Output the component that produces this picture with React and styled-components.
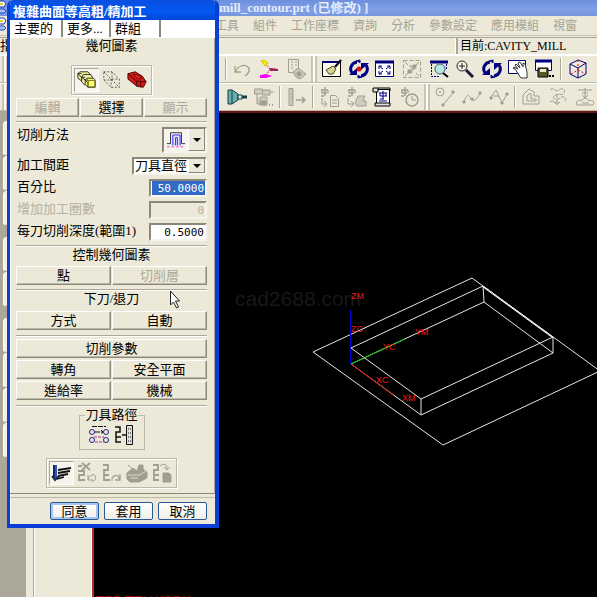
import React, { useState } from 'react'
import styled, { createGlobalStyle, css } from 'styled-components'

const GlobalStyle = createGlobalStyle`
    * {
        box-sizing: border-box;
    }

    body {
        margin: 0;
        background: #000;
        font-family: "Liberation Serif", "Noto Sans CJK TC", serif;
        font-size: 13px;
        color: #000;
    }

    button, input, select {
        font: inherit;
        color: inherit;
        margin: 0;
    }
`

const Window = styled.div`
    position: relative;
    display: flex;
    flex-direction: column;
    height: 100vh;
    overflow: hidden;
    background: #ece9d8;
    white-space: nowrap;
`

const TitleBar = styled.header`
    display: flex;
    flex: none;
    gap: 212px;
    height: 16px;
    line-height: 16px;
    overflow: hidden;
    background: linear-gradient(#6d8fdd, #809fe6 60%, #7796e0);
    color: #e4ecfb;
    font-size: 13px;
    font-weight: bold;
`

const MenuBar = styled.nav`
    display: flex;
    flex: none;
    gap: 14px;
    height: 20px;
    overflow: hidden;
    border-bottom: 1px solid #c8c5b5;
`

const MenuMark = styled.span`
    flex: none;
    width: 201px;
    padding-top: 1px;
`

const MenuItem = styled.button`
    flex: none;
    padding: 0;
    border: 0;
    background: none;
    font-size: 12px;
    line-height: 16px;
    color: #a5a294;
`

const CueLine = styled.div`
    display: flex;
    flex: none;
    height: 18px;
    margin-top: 1px;
    line-height: 16px;
    border-top: 1px solid #aca899;
    border-bottom: 1px solid #fff;
`

const Cue = styled.div`
    width: 456px;
    border-right: 1px solid #fff;
`

const Status = styled.div`
    flex: 1;
    padding-left: 2px;
    border-left: 2px solid #aca899;
    font-size: 12px;
`

const ToolBar = styled.div`
    display: flex;
    flex: none;
    align-items: center;
    height: 28px;
    border-top: 1px solid #fff;
    border-bottom: 1px solid #bdb9a8;
    overflow: hidden;
`

const ToolGroup = styled.div`
    display: flex;
    flex: none;
    width: ${props => props.$width}px;
`

const ToolButton = styled.button`
    display: flex;
    flex: 1;
    align-items: center;
    justify-content: center;
    height: 26px;
    padding: 0;
    border: 0;
    background: none;
`

const Divider = styled.span`
    flex: none;
    width: 2px;
    height: 22px;
    margin: 0 2px;
    border-left: 1px solid #aca899;
    border-right: 1px solid #fff;
`

const Grip = styled.span`
    flex: none;
    width: 6px;
    height: 26px;
    margin: 0 2px;
    border-left: 2px solid #c8c5b5;
    border-right: 2px solid #c8c5b5;
    background: #fff;
`

const Work = styled.main`
    display: flex;
    flex: 1;
    min-height: 0;
`

const ResourceBar = styled.aside`
    flex: none;
    width: 26px;
    padding: 10px 0 0 3px;
    background: #aca899;
`

const ResourceGroup = styled.div`
    margin-bottom: 11px;
`

const ResourceTab = styled.button`
    display: block;
    width: 100%;
    height: 35px;
    padding: 0;
    border: 1px solid #fff;
    border-bottom-color: #aca899;
    border-radius: 4px 0 0 4px;
    background: #f3f1e6;
`

const ResourcePanel = styled.div`
    flex: none;
    width: 66px;
    border-left: 7px solid #ece9d8;
    box-shadow: inset 1px 0 #aca899, inset 2px 0 #fff, inset -1px 0 #fff;
    background: #ece9d8;
`

const Viewport = styled.section`
    position: relative;
    flex: 1;
    overflow: hidden;
    border-top: 2px solid #6b1212;
    border-left: 2px solid #b52c2c;
    background: #000;
`

const Model = styled.svg`
    position: relative;
    display: block;
    font-family: "Liberation Sans", sans-serif;
    font-size: 9px;
`

const Watermark = styled.div`
    position: absolute;
    left: 141px;
    top: 174px;
    font: 21px/24px "Liberation Sans", sans-serif;
    color: #181818;
`

const ViewName = styled.div`
    position: absolute;
    left: 2px;
    bottom: -11px;
    font: 13px/15px "Liberation Sans", sans-serif;
    color: #b00000;
`

const Dialog = styled.form`
    position: absolute;
    left: 7px;
    top: 0;
    width: 212px;
    border: solid #0a3fd6;
    border-width: 0 4px 4px 3px;
    border-radius: 6px 6px 0 0;
    background: #ece9d8;
    box-shadow: inset 1px 0 #fff;
    overflow: hidden;
`

const DialogTitle = styled.h1`
    height: 20px;
    margin: 0;
    padding-left: 3px;
    line-height: 23px;
    font-size: 13px;
    font-weight: bold;
    color: #fff;
    background: linear-gradient(#0a4fe0, #0058f0 60%, #0546d8);
`

const Tabs = styled.div`
    display: flex;
    height: 18px;
    background: #fff;
`

const Tab = styled.button`
    width: ${props => props.$width}px;
    height: 17px;
    padding: 0 0 0 4px;
    border: 0;
    border-right: 2px solid #8b887a;
    background: #fff;
    line-height: 15px;
    text-align: left;
`

const Panel = styled.div`
    display: flex;
    flex-direction: column;
    padding: 0 7px 5px 6px;
    border-right: 1px solid #aca899;
    border-bottom: 1px solid #8b887a;
`

const Heading = styled.h2`
    margin: 0;
    font-size: 13px;
    font-weight: normal;
    line-height: 16px;
    text-align: center;
`

const Rule = styled.hr`
    width: 100%;
    height: 2px;
    margin: ${props => props.$above || 4}px 0 0;
    border: 0;
    border-top: 1px solid #aca899;
    border-bottom: 1px solid #fff;
`

const IconBox = styled.div`
    display: flex;
    align-self: center;
    align-items: center;
    height: 30px;
    margin-top: ${props => props.$above}px;
    padding: 2px;
    border: 1px solid #bdb9a8;
    box-shadow: inset 1px 1px #fff, 1px 1px #fff;
`

const IconButton = styled.button`
    display: flex;
    align-items: center;
    justify-content: center;
    width: 25px;
    height: 24px;
    padding: 0;
    border: 1px solid transparent;
    background: none;

    ${props => props.$pressed && css`
        border-color: #aca899 #fff #fff #aca899;
        background: #f6f4ec;
    `}
`

const Buttons = styled.div`
    display: grid;
    grid-template-columns: repeat(${props => props.$columns}, 1fr);
    gap: 1px;
    margin-top: ${props => props.$above || 2}px;
`

const PushButton = styled.button`
    height: 19px;
    padding: 0;
    border: 1px solid;
    border-color: #fff #8b887a #8b887a #fff;
    box-shadow: inset -1px -1px #bdb9a8;
    background: #ece9d8;
    line-height: 15px;

    &:disabled {
        color: #aca899;
    }
`

const Row = styled.div`
    display: flex;
    justify-content: space-between;
    height: ${props => props.$height || 18}px;
    margin-top: 4px;
`

const Label = styled.label`
    line-height: 15px;
    padding-left: 1px;
    color: ${props => props.$dim ? '#b5b1a2' : '#000'};
`

const sunken = css`
    border: 2px solid;
    border-color: #8b887a #f6f4ec #f6f4ec #8b887a;
`

const NumberBox = styled.input`
    ${sunken}
    width: 58px;
    height: 18px;
    padding: 0 1px;
    background: #fff;
    font: 11px "DejaVu Sans Mono", monospace;
    text-align: right;
    outline: none;

    ${props => props.$selected && css`
        background: #316ac5;
        color: #fff;
        box-shadow: inset 1px 0 #fff;
    `}

    &:disabled {
        background: #ece9d8;
        color: #b5b1a2;
    }
`

const SelectBox = styled.div`
    ${sunken}
    position: relative;
    width: 75px;
    height: 18px;
    background: #fff;
`

const Select = styled.select`
    display: block;
    width: 100%;
    height: 14px;
    padding: 0 0 0 1px;
    border: 0;
    background: none;
    appearance: none;
    line-height: 14px;
    outline: none;
`

const MethodButton = styled.button`
    ${sunken}
    position: relative;
    width: 45px;
    height: 26px;
    padding: 1px 0 0 2px;
    background: #f6f4ec;
    text-align: left;
`

const Arrow = styled.span`
    position: absolute;
    top: 0;
    right: 0;
    bottom: 0;
    display: flex;
    align-items: center;
    justify-content: center;
    width: 17px;
    border-left: 1px solid #fff;
    border-right: 1px solid #8b887a;
    border-bottom: 1px solid #8b887a;
    background: #ece9d8;
    pointer-events: none;
`

const PathGroup = styled.fieldset`
    align-self: center;
    display: flex;
    justify-content: center;
    width: 66px;
    height: 43px;
    min-width: 0;
    margin: 0;
    padding: 0;
    border: 1px solid #bdb9a8;
`

const Legend = styled.legend`
    margin: 0 auto;
    padding: 0;
    line-height: 16px;
`

const Footer = styled.div`
    display: flex;
    justify-content: flex-end;
    gap: 5px;
    margin-top: 3px;
    padding: 4px 8px 4px 0;
    border-top: 1px solid #bdb9a8;
`

const DialogButton = styled.button`
    width: 49px;
    height: 18px;
    padding: 0;
    border: 1px solid #2a5a94;
    border-radius: 2px;
    background: linear-gradient(#fff, #f1efe6);
    line-height: 15px;
    box-shadow: ${props => props.$main ? 'inset 0 0 0 2px #a9c4f0' : 'none'};
`

const Pointer = styled.svg`
    position: absolute;
    left: 160px;
    top: 290px;
    pointer-events: none;
`

const G = '#a19e8f'
const N = '#000080'

const Icon = ({ children, color = G, size = 22 }) => (
    <svg width={size} height={size} viewBox="0 0 22 22" fill="none" stroke={color} aria-hidden="true">
        {children}
    </svg>
)

const DownArrow = () => (
    <Arrow>
        <svg width="8" height="4" viewBox="0 0 8 4"><path d="M0 0h8L4 4z" /></svg>
    </Arrow>
)

const AppMark = () => (
    <svg width="7" height="14" viewBox="0 0 7 14" fill="none" aria-hidden="true">
        <path d="M0 1h4l2 3-2 3H0" fill="#f4f6ff" stroke="#2038a0" />
        <path d="M0 3h3v2H0" fill="#e8d020" />
        <path d="M0 9h4l2 2-2 2H0" fill="#a8c4f4" stroke="#2448c8" />
    </svg>
)

const refreshArrows = (
    <g>
        <path d="M9 4a7 7 0 0 0-5 11M13 18a7 7 0 0 0 5-11" stroke={N} strokeWidth="3" />
        <path d="M1 17h8v-7zM21 5h-8v7z" fill={N} stroke="none" />
        <path d="M8 3l4-1v3M14 19l-4 1v-3" fill={N} stroke={N} />
    </g>
)

const clampLetter = <path d="M3 4h7M4 7h5M7 1v9M4 4v3M10 4v3M3 10h3" strokeWidth="1.3" />

const icons = {
    undo: <Icon><path d="M4 8v6h6M4 14C8 7 13 6 17 9c3 3 0 7-3 9" strokeWidth="1.3" /></Icon>,
    csys: (
        <Icon>
            <path d="M7 5l5 6h7M12 11l-5 8" stroke="#c04060" strokeDasharray="2 1" />
            <path d="M3 3l3-1 4 3-3 3-2-3z" fill="#ffe800" stroke="#d8c000" />
            <path d="M12 10l8 1v2h-8z" fill="#a02060" stroke="none" />
            <path d="M3 18l5-1 3 1-3 1H3z" stroke="#f0f" strokeWidth="2" />
        </Icon>
    ),
    info: (
        <Icon>
            <path d="M3.500 1.500h10v13h-10zM6 4h2M10 4h2M6 7h2M10 7h2M6 10h2" />
            <path d="M8 14l5-4 8 6-6 5-4-2z" fill="#c8c5b5" />
            <circle cx="14" cy="16" r="2" fill={G} />
        </Icon>
    ),
    refresh: (
        <Icon color="#000">
            <path d="M1.500 4.500h18v14h-18z" fill="#fffbe8" /><path d="M1 4h19" strokeWidth="2" stroke={N} />
            <path d="M5 12l7-4 3 3-3 5H8z" fill="#ded68a" stroke="#444" /><path d="M14 9l6-7" strokeWidth="2" />
        </Icon>
    ),
    fitRotate: <Icon>{refreshArrows}<circle cx="11" cy="11" r="2.500" fill="#e01010" stroke="none" /></Icon>,
    fit: (
        <Icon color={N}>
            <path d="M1.500 3.500h18v15h-18z" fill="#fff" /><path d="M1 4h19" strokeWidth="3" />
            <path d="M5 8l4 3M5 8v3M5 8h3M16 8l-4 3M16 8v3M16 8h-3M5 16l4-3M5 16v-3M5 16h3M16 16l-4-3M16 16v-3M16 16h-3" />
        </Icon>
    ),
    fitSelection: (
        <Icon>
            <path d="M2.500 2.500h17v17h-17z" strokeDasharray="4 2" />
            <path d="M4 4l3 3M18 4l-3 3M4 18l3-3M18 18l-3-3" /><path d="M7 12h3v3H7zM12 7h3v3h-3z" fill={G} /><path d="M8 8h3v7M11 11h3" />
        </Icon>
    ),
    zoomArea: (
        <Icon color={N}>
            <path d="M2 4h18" strokeWidth="3" /><path d="M3.500 6v12.500H12M18.500 6v6" strokeDasharray="2 1" />
            <circle cx="12" cy="11" r="5" fill="#b8e8e0" stroke="#406070" /><path d="M15 15l5 4" stroke="#000" strokeWidth="2" />
        </Icon>
    ),
    zoom: (
        <Icon color="#222">
            <circle cx="8" cy="8" r="5" fill="#f4f2e8" /><path d="M5 8h6M8 5v6" />
            <path d="M12 12l7 7" stroke="#18183a" strokeWidth="3" />
        </Icon>
    ),
    rotate: <Icon>{refreshArrows}</Icon>,
    pan: (
        <Icon color={N}>
            <path d="M1.500 2.500h17v13h-17z" fill="#fff" />
            <path d="M8 11l-2-1 1-1 4 2-3-4 1-1 4 4-2-5 2-1 3 5v-4l2 1 2 8v6h-6z" fill="#fff" stroke="#333" />
        </Icon>
    ),
    saveView: (
        <Icon color={N}>
            <path d="M1.500 2.500h16v10h-16z" fill="#fff" /><path d="M1 3h17" strokeWidth="3" />
            <path d="M4 10h10v9H4z" fill="#555a20" stroke="#000" /><path d="M6 11h6v3H6z" fill="#ece9d8" stroke="none" />
            <path d="M15 18h2M18 18h2" stroke="#000" strokeWidth="2" />
        </Icon>
    ),
    cube: (
        <Icon color={N}>
            <path d="M3 6l8-4 8 3v11l-8 4-8-4zM3 6l8 4 8-5M11 10v10" />
            <path d="M11 2v10M4 16l7-4 8 4" stroke="#e01010" strokeDasharray="2 2" />
        </Icon>
    ),
    tool: (
        <Icon color="#133f45">
            <path d="M2 4h4l6 4v6l-6 4H2z" fill="#68b0b0" /><path d="M6 4v14" />
            <path d="M12 9h4v4h-4z" fill="#dceeee" /><path d="M16 11h5" strokeWidth="3" />
        </Icon>
    ),
    toolCopy: (
        <Icon>
            <path d="M1.500 3h8v5h-8zM9 4h8v5H9M17 6h4M4 8v10h4M7 11h7v8H7z" fill="#cfccbd" />
            <path d="M8 15h5v4H8z" fill={G} /><path d="M16 19h1M19 19h1" strokeWidth="2" />
        </Icon>
    ),
    measure: <Icon><path d="M3 2.500h4v17H3zM5 5h2M5 8h2M5 11h2M5 14h2" fill="#cfccbd" /><path d="M10 14h9M16 11l3 3-3 3" strokeWidth="1.500" /></Icon>,
    genA: <Icon>{clampLetter}<path d="M4 12v6h5M6 15l3 3-3 3M12.500 9.500h5l3 3v8h-8zM14 14h5M14 17h5" /></Icon>,
    genB: <Icon>{clampLetter}<path d="M3 12v6h5M6 15l3 3-3 3" /><path d="M13 10h7l-2 5h3v5h-9l-2-3z" fill="#cfccbd" /></Icon>,
    post: (
        <Icon color={N}>
            <path d="M5.500 3.500h13v14h-13z" fill="#fff" stroke="#000" />
            <path d="M2 2h5v4H2zM4 17h15v3H4z" fill="#ddd" stroke="#000" />
            <path d="M7 2h12v3" stroke="#000" />
            <path d="M8 7h8M9 10h7M12 5v8M9 7v3M15 7v3M9 13h4M8 15h8" />
        </Icon>
    ),
    time: <Icon>{clampLetter}<circle cx="14" cy="14" r="6" fill="#ece9d8" strokeWidth="1.500" /><path d="M14 10v4h4" /></Icon>,
    lineTool: <Icon><circle cx="6" cy="6" r="4" /><path d="M5 6h2M6 5v2M8 20L19 7" /><path d="M18 5h2v2h-2zM8 18h2v2H8z" fill={G} /></Icon>,
    spline: <Icon><path d="M3 16c4-12 6-4 8-2s6-2 8-7" /><path d="M2 15h2v2H2zM10 12h2v2h-2zM18 6h2v2h-2z" fill={G} /></Icon>,
    polyline: <Icon><path d="M2 12L8 4l6 13 5-9M5 10h6" /><path d="M2 11h2v2H2zM13 16h2v2h-2zM18 7h2v2h-2z" fill={G} /></Icon>,
    offset: <Icon><path d="M3 18V9l6-6 5 3v4h5v8zM7 14v-4l3-3 1 1v5h5v2H7z" /></Icon>,
    wave: <Icon><path d="M3 4c4-4 5 3 9 0s7 0 5 3-8 0-10 3 2 5 6 2 7 0 5 3M3 16c4-3 5 3 9 0M10 8v10M7 16l3 3 3-3" strokeDasharray="4 1" /></Icon>,
    project: <Icon><path d="M4 4h14M8 7h6M11 2v9M8 9l3 3 3-3M3 19c-2-3 2-6 4-4 3-4 7-3 8 0 4-2 6 2 4 4zM8 17h7" /></Icon>,
    part: (
        <Icon color="#222" size={20}>
            <path d="M1 4l2-2h9l3 3-2 7H5l-4-3z" fill="#f4f09a" />
            <path d="M5 8l2-3h8l2 3-2 8H8l-3-3z" fill="#f4f09a" />
            <path d="M9 11l2-2h7l2 2v8h-8l-3-3z" fill="#fff878" />
            <path d="M9 11h3l1 2M1 4h4M5 8h4M1 4l4 4 4 3 3 3v5" />
            <path d="M12.500 11.500h7v7h-7z" fill="#fffa78" stroke="#77711c" />
        </Icon>
    ),
    blank: <Icon color="#444" size={20}><path d="M2 2h9l8 8v9h-9l-8-8zM2 2l8 8h9M10 10v9M11 2v9l8 8M2 11h9" strokeDasharray="2 2" /></Icon>,
    check: (
        <Icon color="#400" size={20}>
            <path d="M1 4l8-2 8 5 4 6-3 6-7-1L1 10z" fill="#d01818" />
            <path d="M1 4l9 8 8 1 3-1M10 12l1 6M15 13v6" /><path d="M7 5l4 0 5 4-4 1z" stroke="#600" fill="#f02828" />
        </Icon>
    ),
    method: (
        <Icon color="#222" size={20}>
            <path d="M1 15h4V3h12v12h4" />
            <path d="M6 5h10v12H6z" fill="#c5c5ff" fillOpacity=".5" stroke="none" />
            <path d="M7.500 17V5.500h8V17M10.500 17V8.500h2V17" stroke="#2a2af0" />
            <path d="M1 18.500h20" stroke="#f030c0" strokeDasharray="3 2" />
        </Icon>
    ),
    pathEdit: (
        <Icon color="#22228a">
            <circle cx="4" cy="8" r="2.500" /><circle cx="18" cy="8" r="2.500" /><circle cx="4" cy="16" r="2.500" /><circle cx="18" cy="16" r="2.500" />
            <path d="M4 2.500h14M7 8h8M13 6l2 2-2 2" stroke="#111" strokeDasharray="5 1" /><path d="M6 13h10M7 18h9" stroke="#b030a0" strokeDasharray="3 1" />
        </Icon>
    ),
    machine: (
        <Icon color="#111">
            <path d="M2 3h5v5H3v5h5M3 13v5h5M9 11h4" strokeWidth="1.500" /><path d="M13.500 1.500h6v19h-6z" fill="#ddd" />
            <path d="M15 5h1M17 5h1M15 9h1M17 9h1M15 13h1M17 13h1M15 17h1M17 17h1" />
        </Icon>
    ),
    generate: (
        <Icon color="#111">
            <path d="M5 3v13" stroke="#2a58c0" strokeWidth="2" /><path d="M3 3v13M1 14l3 4 4-4" stroke="#152a58" strokeWidth="2" />
            <path d="M7 8l13-2M7 11l12-2M7 14l10-2M6 17l7-2" strokeWidth="1.800" />
        </Icon>
    ),
    reject: <Icon><path d="M6 1l8 7M14 1L6 8M2 4h4M2 9h6v4H3v5h6" strokeWidth="1.800" /><path d="M12 13v5h5M12 18c2-8 10-6 7 0l-3 2" /></Icon>,
    replay: <Icon><path d="M2 3h5v5H3v5h5M3 13v5h6" strokeWidth="1.800" /><path d="M19 12v6h-5M19 18c-2-8-9-4-8 1" strokeWidth="1.300" /></Icon>,
    verify: <Icon><path d="M1 11l6-5 4 3 2-6h4v4l4 3v6l-8 4H4l-3-3z" fill={G} /><path d="M2 13h12l6-4M4 16h8" stroke="#dedbcb" /><path d="M2 3l9 8" /></Icon>,
    list: <Icon><path d="M2 3h5v5H3v5h5M3 13v5h5" strokeWidth="1.800" /><path d="M9 4c4-3 7-2 7 3M13 5l3 3 3-3" /><path d="M12 11h6l2 2v7h-8z" fill={G} /></Icon>,
}

const toolNames = {
    view: ['refresh', 'fitRotate', 'fit', 'fitSelection', 'zoomArea', 'zoom', 'rotate', 'pan', 'saveView'],
    path: ['genA', 'genB', 'post', 'time'],
}

const Tools = ({ names = [], width }) => (
    <ToolGroup $width={width}>
        {names.map(name => (
            <ToolButton key={name} type="button" aria-label={name}>{icons[name]}</ToolButton>
        ))}
    </ToolGroup>
)

const menus = ['工具', '組件', '工作座標', '資詢', '分析', '參數設定', '應用模組', '視窗']

const Scene = () => (
    <Model width="503" height="484" viewBox="94 113 503 484" fill="none" stroke="#e6e6e6">
        <path d="M313 352L472 278L600 371L443 445Z" />
        <path d="M351 348L483 286L553 337L421 399Z" />
        <path d="M351 364L484 302L553 353L421 415Z" />
        <path d="M483 286L484 302M553 337V353M421 399V415" />
        <path d="M483 287L553 338" stroke="#fff" />
        <path d="M351 364L405 339" stroke="#00c800" />
        <path d="M351 364L393 395" stroke="#d80000" />
        <path d="M350.500 310V364" stroke="#0000d8" />
        <g fill="#f01818" stroke="none">
            <text x="351" y="299">ZM</text>
            <text x="351" y="332">ZC</text>
            <text x="415" y="335">YM</text>
            <text x="383" y="350">YC</text>
            <text x="376" y="383">XC</text>
            <text x="402" y="401">XM</text>
        </g>
    </Model>
)

const MillDialog = () => {

    const [percent, setPercent] = useState('50.0000')
    const [depth, setDepth] = useState('0.5000')

    return (
        <Dialog onSubmit={e => e.preventDefault()}>
            <DialogTitle>複雜曲面等高粗/精加工</DialogTitle>
            <Tabs>
                <Tab type="button" $width={53}>主要的</Tab>
                <Tab type="button" $width={48}>更多...</Tab>
                <Tab type="button" $width={50}>群組</Tab>
            </Tabs>

            <Panel>
                <Heading>幾何圖素</Heading>
                <IconBox $above={11}>
                    <IconButton type="button" aria-label="part" $pressed>{icons.part}</IconButton>
                    <IconButton type="button" aria-label="blank">{icons.blank}</IconButton>
                    <IconButton type="button" aria-label="check">{icons.check}</IconButton>
                </IconBox>
                <Buttons $columns={3} $above={3}>
                    <PushButton type="button" disabled>編輯</PushButton>
                    <PushButton type="button">選擇</PushButton>
                    <PushButton type="button" disabled>顯示</PushButton>
                </Buttons>
                <Rule />

                <Row $height={26}>
                    <Label htmlFor="method">切削方法</Label>
                    <MethodButton id="method" type="button">{icons.method}<DownArrow /></MethodButton>
                </Row>
                <Row>
                    <Label htmlFor="stepover">加工間距</Label>
                    <SelectBox>
                        <Select id="stepover"><option>刀具直徑</option></Select>
                        <DownArrow />
                    </SelectBox>
                </Row>
                <Row>
                    <Label htmlFor="percent">百分比</Label>
                    <NumberBox id="percent" $selected value={percent} onChange={e => setPercent(e.target.value)} />
                </Row>
                <Row>
                    <Label htmlFor="passes" $dim>增加加工圈數</Label>
                    <NumberBox id="passes" disabled value="0" readOnly />
                </Row>
                <Row>
                    <Label htmlFor="depth">每刀切削深度(範圍1)</Label>
                    <NumberBox id="depth" value={depth} onChange={e => setDepth(e.target.value)} />
                </Row>
                <Rule />

                <Heading>控制幾何圖素</Heading>
                <Buttons $columns={2} $above={3}>
                    <PushButton type="button">點</PushButton>
                    <PushButton type="button" disabled>切削層</PushButton>
                </Buttons>
                <Rule />

                <Heading>下刀/退刀</Heading>
                <Buttons $columns={2} $above={4}>
                    <PushButton type="button">方式</PushButton>
                    <PushButton type="button">自動</PushButton>
                </Buttons>
                <Rule $above={5} />

                <Buttons $columns={1}>
                    <PushButton type="button">切削參數</PushButton>
                </Buttons>
                <Buttons $columns={2}>
                    <PushButton type="button">轉角</PushButton>
                    <PushButton type="button">安全平面</PushButton>
                </Buttons>
                <Buttons $columns={2}>
                    <PushButton type="button">進給率</PushButton>
                    <PushButton type="button">機械</PushButton>
                </Buttons>
                <Rule $above={5} />

                <PathGroup>
                    <Legend>刀具路徑</Legend>
                    <IconButton type="button" aria-label="edit">{icons.pathEdit}</IconButton>
                    <IconButton type="button" aria-label="machine">{icons.machine}</IconButton>
                </PathGroup>
                <IconBox $above={8}>
                    <IconButton type="button" aria-label="generate" $pressed>{icons.generate}</IconButton>
                    <IconButton type="button" aria-label="reject">{icons.reject}</IconButton>
                    <IconButton type="button" aria-label="replay">{icons.replay}</IconButton>
                    <IconButton type="button" aria-label="verify">{icons.verify}</IconButton>
                    <IconButton type="button" aria-label="list">{icons.list}</IconButton>
                </IconBox>
            </Panel>

            <Footer>
                <DialogButton $main>同意</DialogButton>
                <DialogButton type="button">套用</DialogButton>
                <DialogButton type="button">取消</DialogButton>
            </Footer>
            <Pointer width="12" height="19" viewBox="0 0 12 19" fill="#fff" stroke="#222">
                <path d="M.5 1v14l3-3 3 6 2-1-3-6h4z" />
            </Pointer>
        </Dialog>
    )
}

const App = () => {
    return (
        <Window>
            <GlobalStyle />
            <TitleBar>
                <AppMark />
                <span>mill_contour.prt (已修改) ]</span>
            </TitleBar>
            <MenuBar>
                <MenuMark><AppMark /></MenuMark>
                {menus.map(menu => <MenuItem key={menu} type="button">{menu}</MenuItem>)}
            </MenuBar>
            <CueLine>
                <Cue>指</Cue>
                <Status>目前:CAVITY_MILL</Status>
            </CueLine>
            <ToolBar>
                <Grip />
                <Tools width={213} />
                <Divider />
                <Tools names={['undo', 'csys', 'info']} width={80} />
                <Grip />
                <Tools names={toolNames.view} width={239} />
                <Divider />
                <Tools names={['cube']} width={27} />
            </ToolBar>
            <ToolBar>
                <Grip />
                <Tools width={214} />
                <Tools names={['tool', 'toolCopy']} width={53} />
                <Divider />
                <Tools names={['measure']} width={27} />
                <Divider />
                <Tools names={toolNames.path} width={106} />
                <Grip />
                <Tools names={['lineTool', 'spline', 'polyline']} width={80} />
                <Divider />
                <Tools names={['offset', 'wave', 'project']} width={80} />
            </ToolBar>
            <Work>
                <ResourceBar>
                    {[3, 2, 4].map(count => (
                        <ResourceGroup key={count}>
                            {Array(count).fill(null).map((_, i) => <ResourceTab key={i} type="button" aria-label="tab" />)}
                        </ResourceGroup>
                    ))}
                </ResourceBar>
                <ResourcePanel />
                <Viewport>
                    <Watermark>cad2688.com</Watermark>
                    <Scene />
                    <ViewName>TFR-TRI WORK</ViewName>
                </Viewport>
            </Work>
            <MillDialog />
        </Window>
    )
}

export default App
